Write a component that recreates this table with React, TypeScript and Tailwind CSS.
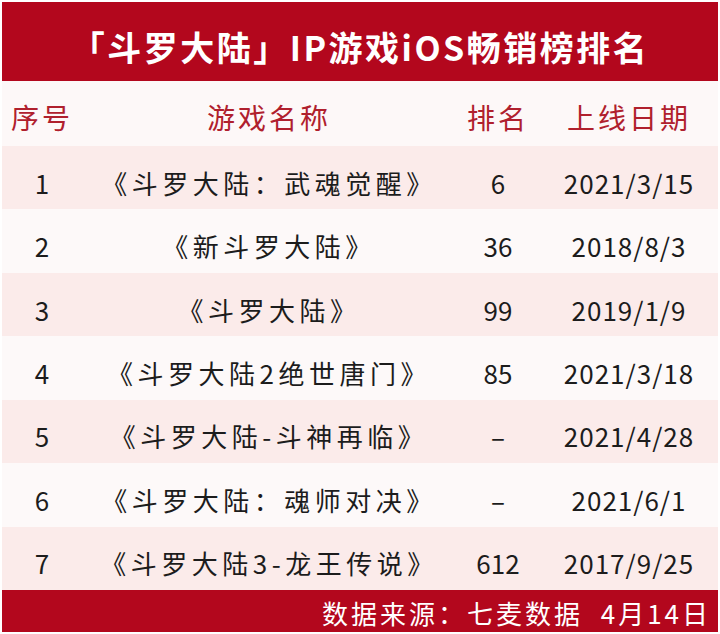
const rows = [
  { no: '1', name: '《斗罗大陆：武魂觉醒》', rank: '6', date: '2021/3/15' },
  { no: '2', name: '《新斗罗大陆》', rank: '36', date: '2018/8/3' },
  { no: '3', name: '《斗罗大陆》', rank: '99', date: '2019/1/9' },
  { no: '4', name: '《斗罗大陆2绝世唐门》', rank: '85', date: '2021/3/18' },
  { no: '5', name: '《斗罗大陆-斗神再临》', rank: '–', date: '2021/4/28' },
  { no: '6', name: '《斗罗大陆：魂师对决》', rank: '–', date: '2021/6/1' },
  { no: '7', name: '《斗罗大陆3-龙王传说》', rank: '612', date: '2017/9/25' },
];

const font = { fontFamily: '"Noto Sans CJK SC", "Noto Sans", sans-serif' };

export default function App() {
  return (
    <div className="flex h-[634px] w-[720px] flex-col bg-white p-[2px]" style={font}>
      <div className="flex h-[79px] items-center justify-center bg-[#b3071d] pt-[10px] text-[34px] font-bold tracking-[2.5px] text-white">
        「斗罗大陆」IP游戏iOS畅销榜排名
      </div>

      <div className="grid h-[65px] grid-cols-[80px_374px_84px_178px] items-center bg-[#fdf8f8] pt-[7px] text-[28px] text-[#b0202d]">
        <span className="text-center tracking-[3px]">序号</span>
        <span className="text-center tracking-[3px]">游戏名称</span>
        <span className="text-center tracking-[3px]">排名</span>
        <span className="text-center tracking-[3px]">上线日期</span>
      </div>

      <div className="flex flex-1 flex-col">
        {rows.map((row, i) => (
          <div
            key={row.no}
            className={`grid flex-1 grid-cols-[80px_374px_84px_178px] items-center pt-[9px] text-[26px] text-[#1c1c1c] ${
              i % 2 === 0 ? 'bg-[#fbebea]' : 'bg-[#fdf9f9]'
            }`}
          >
            <span className="text-center">{row.no}</span>
            <span className="text-center tracking-[4.5px]">{row.name}</span>
            <span className="text-center">{row.rank}</span>
            <span className="text-center tracking-[1px]">{row.date}</span>
          </div>
        ))}
      </div>

      <div className="flex h-[42px] items-center justify-end bg-[#b3071d] pr-[7px] pt-[3px] text-[26px] tracking-[3px] text-white">
        数据来源：七麦数据&nbsp;&nbsp;4月14日
      </div>
    </div>
  );
}
